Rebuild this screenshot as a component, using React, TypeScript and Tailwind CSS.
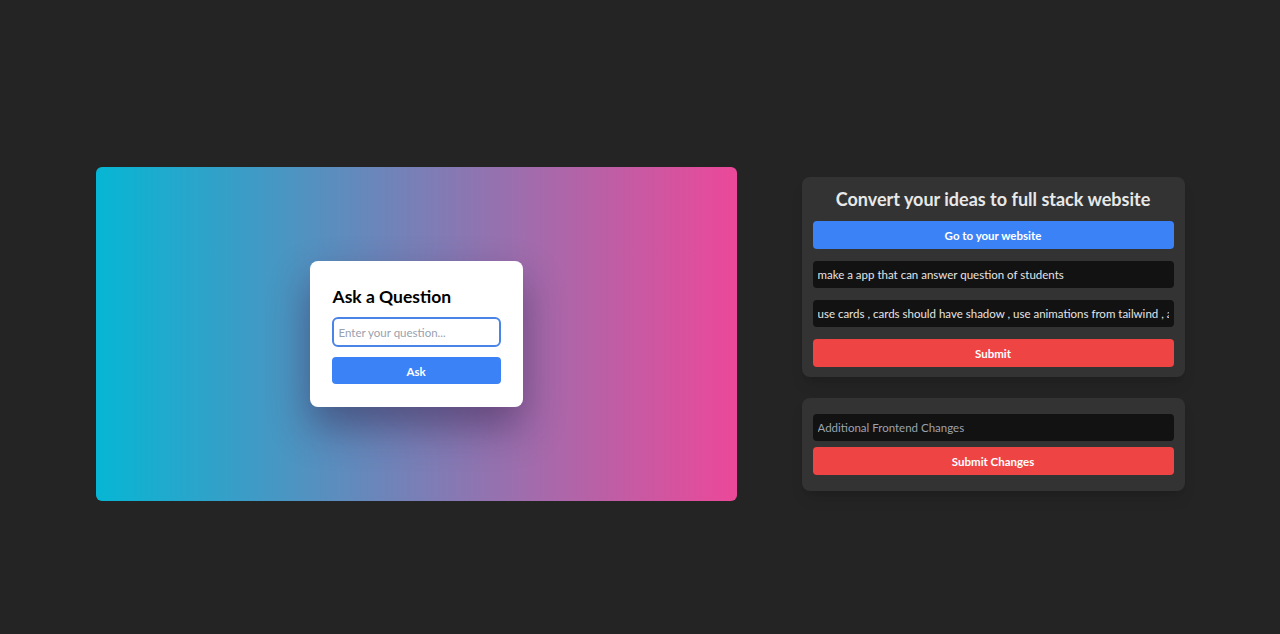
import React, { useState } from 'react';

const font = { fontFamily: 'Lato, "Open Sans", sans-serif' };

function AskCard() {
    const [question, setQuestion] = useState('');

    return (
        <div className="w-[213px] bg-white rounded-lg px-[22px] pt-[22px] pb-[23px] shadow-[0_20px_40px_rgba(40,20,60,0.45)]">
            <h2 className="text-[17.5px] leading-7 font-bold text-black mb-[6px] pl-px">Ask a Question</h2>
            <input
                className="w-full h-[30px] px-[5px] text-[11.5px] text-gray-700 placeholder-gray-400 border-2 border-[#4a84e6] rounded-md outline-none"
                placeholder="Enter your question..."
                value={question}
                onChange={(e) => setQuestion(e.target.value)}
            />
            <button className="w-full h-[27px] mt-[10px] pt-[2px] bg-[#3b82f6] text-white text-[11.5px] font-bold rounded">Ask</button>
        </div>
    );
}

export default function App() {
    const [idea, setIdea] = useState('make a app that can answer question of students');
    const [details, setDetails] = useState(
        'use cards , cards should have shadow , use animations from tailwind , add hover effects to buttons'
    );
    const [changes, setChanges] = useState('');

    return (
        <div className="h-screen bg-[#242424] flex justify-center items-center pt-[34px]" style={font}>
            <div className="flex items-center gap-[65px]">
                <div className="w-[641px] h-[334px] rounded-md bg-[linear-gradient(to_right,#06b6d4,#ec4899)] flex items-center justify-center">
                    <AskCard />
                </div>

                <div className="w-[383px] flex flex-col gap-[21px]">
                    <div className="bg-[#333333] rounded-lg px-[11px] pt-[8px] pb-[10px] shadow-lg">
                        <h1 className="text-[18px] leading-7 font-bold text-[#e8e8e8] text-center">
                            Convert your ideas to full stack website
                        </h1>
                        <button className="w-full h-[28px] mt-[8px] pt-px bg-[#3b82f6] text-white text-[11.5px] font-bold rounded">
                            Go to your website
                        </button>
                        <input
                            className="w-full h-[27px] mt-[12px] px-[5px] bg-[#121212] text-[#e5e5e5] text-[11.5px] rounded outline-none"
                            value={idea}
                            onChange={(e) => setIdea(e.target.value)}
                        />
                        <input
                            className="w-full h-[27px] mt-[12px] px-[5px] bg-[#121212] text-[#e5e5e5] text-[11.5px] rounded outline-none"
                            value={details}
                            onChange={(e) => setDetails(e.target.value)}
                        />
                        <button className="w-full h-[28px] mt-[12px] pt-[2px] bg-[#ef4444] text-white text-[11.5px] font-bold rounded">
                            Submit
                        </button>
                    </div>

                    <div className="bg-[#333333] rounded-lg px-[11px] py-4 flex flex-col gap-[6px] shadow-lg">
                        <input
                            className="w-full h-[27px] px-[5px] bg-[#121212] text-[#e5e5e5] placeholder-[#9ca3af] text-[11.5px] rounded outline-none"
                            placeholder="Additional Frontend Changes"
                            value={changes}
                            onChange={(e) => setChanges(e.target.value)}
                        />
                        <button className="w-full h-[28px] pt-[2px] bg-[#ef4444] text-white text-[11.5px] font-bold rounded">
                            Submit Changes
                        </button>
                    </div>
                </div>
            </div>
        </div>
    );
}
